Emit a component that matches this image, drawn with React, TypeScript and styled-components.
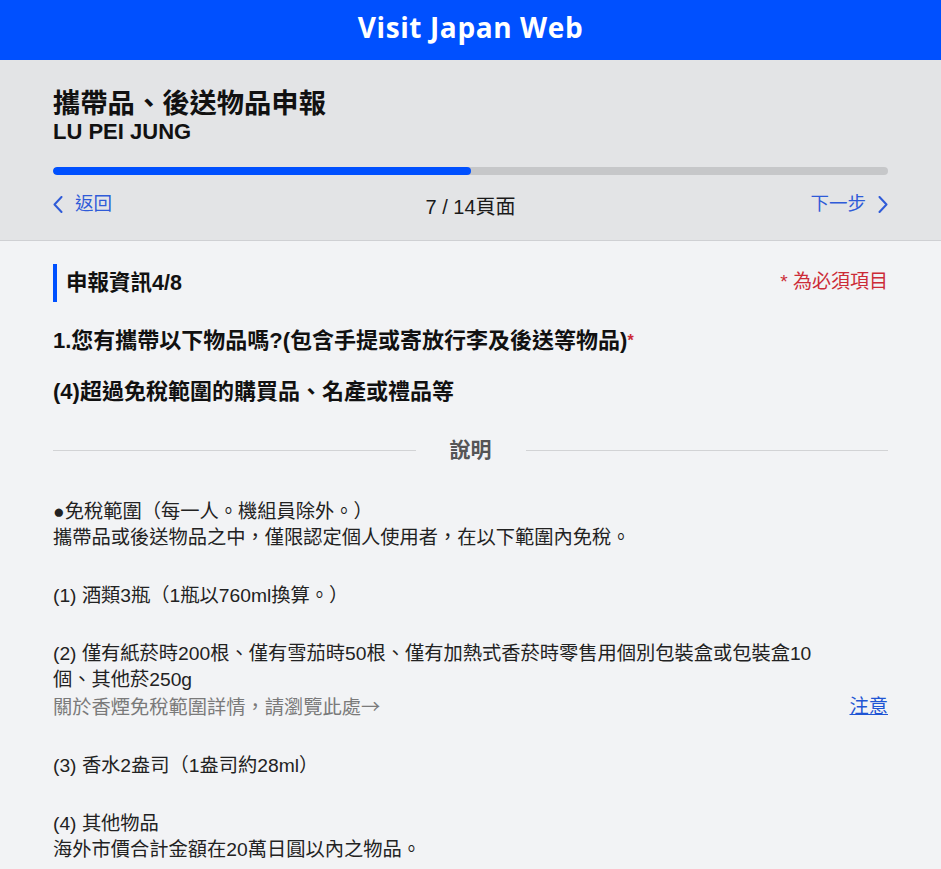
import React from "react";
import styled, { createGlobalStyle } from "styled-components";

const Global = createGlobalStyle`
  html, body { margin: 0; padding: 0; }
  body {
    background: #f2f3f5;
    font-family: "Liberation Sans", "Noto Sans CJK TC", Arial, sans-serif;
    color: #1f1f1f;
  }
  * { box-sizing: border-box; }
`;

const TopBar = styled.header`
  height: 60px;
  background: #0050ff;
  display: flex;
  align-items: center;
  justify-content: center;
`;

const Brand = styled.h1`
  margin: 0;
  font-family: "Open Sans", "Noto Sans", sans-serif;
  font-weight: 700;
  font-size: 28px;
  letter-spacing: 0.6px;
  color: #ffffff;
  line-height: 1;
  padding-bottom: 6px;
`;

const Summary = styled.section`
  background: #e3e4e6;
  border-bottom: 1px solid #cfd0d3;
  padding: 28px 53px 21px;
`;

const Title = styled.h2`
  margin: 0;
  font-size: 27.3px;
  line-height: 32px;
  font-weight: 700;
  color: #111;
`;

const Name = styled.div`
  font-size: 22px;
  line-height: 24px;
  font-weight: 700;
  color: #111;
`;

const Track = styled.div`
  margin-top: 23px;
  height: 8px;
  border-radius: 4px;
  background: #c6c7c9;
  overflow: hidden;
`;

const Fill = styled.div`
  height: 100%;
  background: #0050ff;
  border-radius: 4px;
`;

const NavRow = styled.nav`
  margin-top: 17px;
  display: grid;
  grid-template-columns: 1fr auto 1fr;
  align-items: start;
`;

const NavLink = styled.a<{ $end?: boolean }>`
  display: flex;
  align-items: center;
  justify-self: ${(p) => (p.$end ? "end" : "start")};
  gap: 12px;
  font-size: 18.5px;
  line-height: 24px;
  color: #2f5bd8;
  text-decoration: none;
  cursor: pointer;
`;

const PageCount = styled.div`
  margin-top: 3px;
  font-size: 20px;
  line-height: 24px;
  color: #1a1a1a;
`;

const Content = styled.main`
  padding: 23px 53px 40px;
`;

const SectionHead = styled.div`
  display: flex;
  align-items: center;
  justify-content: space-between;
  height: 38px;
`;

const SectionTitle = styled.h3`
  margin: 0;
  height: 38px;
  display: flex;
  align-items: center;
  border-left: 4px solid #0050ff;
  padding: 0 0 5px 9px;
  font-size: 21.5px;
  font-weight: 700;
  color: #111;
`;

const Required = styled.span`
  font-size: 19px;
  color: #cc2b37;
  margin-top: -8px;
`;

const Question = styled.p<{ $top: number }>`
  margin: ${(p) => p.$top}px 0 0;
  font-size: 22px;
  line-height: 30px;
  font-weight: 700;
  color: #111;
`;

const Star = styled.span`
  color: #cc2b37;
  font-size: 16px;
  vertical-align: top;
`;

const Divider = styled.div`
  margin-top: 28px;
  display: flex;
  align-items: center;
  gap: 34px;
  &::before, &::after {
    content: "";
    flex: 1;
    height: 1px;
    background: #d2d3d5;
  }
`;

const DividerLabel = styled.span`
  font-size: 21px;
  line-height: 30px;
  font-weight: 700;
  color: #555;
`;

const Notes = styled.div`
  margin-top: 34px;
  display: flex;
  flex-direction: column;
  gap: 32px;
`;

const Para = styled.div`
  font-size: 19.25px;
  line-height: 26px;
  color: #222;
`;

const SubRow = styled.div`
  display: flex;
  justify-content: space-between;
  align-items: center;
`;

const Muted = styled.span`
  color: #7a7a7a;
`;

const Arrow = styled.span`
  font-family: "Noto Sans CJK TC", sans-serif;
`;

const Attention = styled.a`
  color: #1f55d4;
  text-decoration: underline;
  cursor: pointer;
`;

const Chevron = ({ dir }: { dir: "left" | "right" }) => (
  <svg width="10" height="17" viewBox="0 0 10 17" fill="none">
    <polyline
      points={dir === "left" ? "8.5,1 1.5,8.5 8.5,16" : "1.5,1 8.5,8.5 1.5,16"}
      stroke="#2f5bd8"
      strokeWidth="2"
      strokeLinecap="round"
      strokeLinejoin="round"
    />
  </svg>
);

export default function App() {
  const current = 7;
  const total = 14;
  return (
    <>
      <Global />
      <TopBar>
        <Brand>Visit Japan Web</Brand>
      </TopBar>
      <Summary>
        <Title>攜帶品、後送物品申報</Title>
        <Name>LU PEI JUNG</Name>
        <Track>
          <Fill style={{ width: `${(current / total) * 100}%` }} />
        </Track>
        <NavRow>
          <NavLink>
            <Chevron dir="left" />
            返回
          </NavLink>
          <PageCount>
            {current} / {total}頁面
          </PageCount>
          <NavLink $end>
            下一步
            <Chevron dir="right" />
          </NavLink>
        </NavRow>
      </Summary>
      <Content>
        <SectionHead>
          <SectionTitle>申報資訊4/8</SectionTitle>
          <Required>* 為必須項目</Required>
        </SectionHead>
        <Question $top={24}>
          1.您有攜帶以下物品嗎?(包含手提或寄放行李及後送等物品)<Star>*</Star>
        </Question>
        <Question $top={21}>(4)超過免稅範圍的購買品、名產或禮品等</Question>
        <Divider>
          <DividerLabel>說明</DividerLabel>
        </Divider>
        <Notes>
          <Para>
            ●免稅範圍（每一人。機組員除外。）
            <br />
            攜帶品或後送物品之中，僅限認定個人使用者，在以下範圍內免稅。
          </Para>
          <Para>(1) 酒類3瓶（1瓶以760ml換算。）</Para>
          <Para>
            (2) 僅有紙菸時200根、僅有雪茄時50根、僅有加熱式香菸時零售用個別包裝盒或包裝盒10
            <br />
            個、其他菸250g
            <SubRow>
              <Muted>
                關於香煙免稅範圍詳情，請瀏覽此處<Arrow>→</Arrow>
              </Muted>
              <Attention>注意</Attention>
            </SubRow>
          </Para>
          <Para>(3) 香水2盎司（1盎司約28ml）</Para>
          <Para>
            (4) 其他物品
            <br />
            海外市價合計金額在20萬日圓以內之物品。
          </Para>
        </Notes>
      </Content>
    </>
  );
}
